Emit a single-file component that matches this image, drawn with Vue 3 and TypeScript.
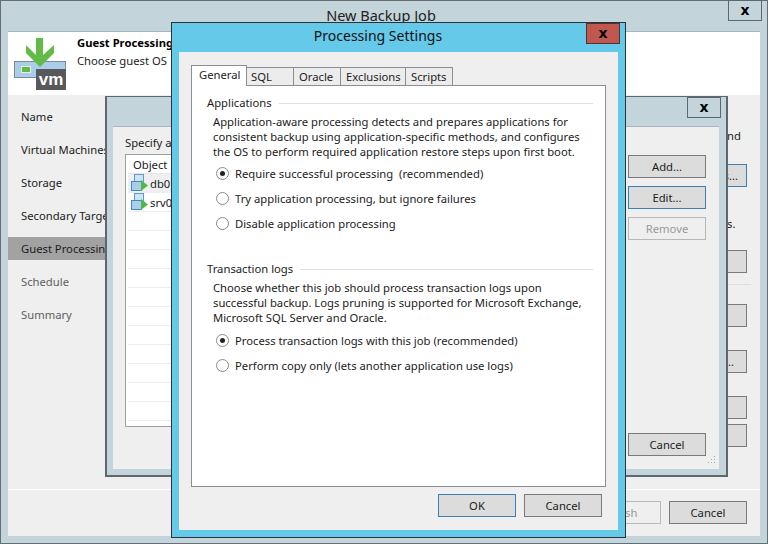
<script setup lang="ts">
const steps = [
  { label: 'Name', state: '' },
  { label: 'Virtual Machines', state: '' },
  { label: 'Storage', state: '' },
  { label: 'Secondary Target', state: '' },
  { label: 'Guest Processing', state: 'active' },
  { label: 'Schedule', state: 'muted' },
  { label: 'Summary', state: 'muted' },
]
const gridRows = 13
const tabs = ['SQL', 'Oracle', 'Exclusions', 'Scripts']
const appOptions = [
  { label: 'Require successful processing  (recommended)', on: true },
  { label: 'Try application processing, but ignore failures', on: false },
  { label: 'Disable application processing', on: false },
]
const logOptions = [
  { label: 'Process transaction logs with this job (recommended)', on: true },
  { label: 'Perform copy only (lets another application use logs)', on: false },
]
</script>

<template>
  <div class="desktop">
    <!-- main wizard window -->
    <section class="win main-win">
      <header class="main-title">New Backup Job</header>
      <button class="close main-close">x</button>
      <div class="main-client">
        <div class="banner">
          <svg class="logo" width="54" height="54" viewBox="0 0 54 54">
            <rect x="0.5" y="24.5" width="51" height="16" fill="#a9cdea" stroke="#7b8b96" />
            <rect x="7.5" y="29.5" width="9" height="6" fill="#62bb46" stroke="#e4f0e0" />
            <path d="M22 1h7v17l11-10v8L26 30 12 16V8l10 10z" fill="#62bb46" />
            <rect x="22" y="32" width="30" height="21" fill="#58595b" />
            <text x="37" y="48" class="vm">vm</text>
          </svg>
          <div class="banner-text">
            <strong>Guest Processing</strong>
            <span>Choose guest OS</span>
          </div>
        </div>
        <div class="main-body">
          <nav class="steps">
            <div v-for="s in steps" :key="s.label" class="step" :class="s.state">{{ s.label }}</div>
          </nav>
          <div class="main-right">
            <span class="frag frag-nd">nd</span>
            <button class="btn blue b1">s...</button>
            <span class="frag frag-s">s.</span>
            <button class="btn b2"></button>
            <hr class="rule" />
            <button class="btn b3"></button>
            <button class="btn b4">...</button>
            <button class="btn b5"></button>
            <button class="btn b6"></button>
          </div>
        </div>
        <footer class="main-foot">
          <button class="btn disabled">Finish</button>
          <button class="btn">Cancel</button>
        </footer>
      </div>
    </section>

    <!-- middle dialog -->
    <section class="win mid-win">
      <button class="close mid-close">x</button>
      <div class="mid-client">
        <div class="mid-left">
          <div class="specify">Specify a</div>
          <div class="list">
            <div class="list-head">Object</div>
            <div class="list-row selected">
              <svg class="vmicon" width="17" height="18" viewBox="0 0 17 18">
                <rect x="3.5" y="0.5" width="9" height="9" fill="#cfe3f4" stroke="#5b9bd0" />
                <rect x="0.5" y="7.5" width="10" height="9" fill="#a9cdea" stroke="#3f88c5" />
                <path d="M10 6l7 5.5L10 17z" fill="#4fb848" />
              </svg>
              <span>db01</span>
            </div>
            <div class="list-row">
              <svg class="vmicon" width="17" height="18" viewBox="0 0 17 18">
                <rect x="3.5" y="0.5" width="9" height="9" fill="#cfe3f4" stroke="#5b9bd0" />
                <rect x="0.5" y="7.5" width="10" height="9" fill="#a9cdea" stroke="#3f88c5" />
                <path d="M10 6l7 5.5L10 17z" fill="#4fb848" />
              </svg>
              <span>srv01</span>
            </div>
            <div v-for="n in gridRows" :key="n" class="list-row empty"></div>
          </div>
        </div>
        <div class="mid-buttons">
          <button class="btn">Add...</button>
          <button class="btn blue">Edit...</button>
          <button class="btn disabled">Remove</button>
          <button class="btn push">Cancel</button>
        </div>
        <svg class="grip" width="11" height="11" viewBox="0 0 11 11">
          <g fill="#a8a8a8">
            <rect x="8" y="0" width="1" height="1" /><rect x="5" y="3" width="1" height="1" /><rect x="8" y="3" width="1" height="1" />
            <rect x="2" y="6" width="1" height="1" /><rect x="5" y="6" width="1" height="1" /><rect x="8" y="6" width="1" height="1" />
          </g>
        </svg>
      </div>
    </section>

    <!-- front dialog -->
    <section class="win front-win">
      <header class="front-title">Processing Settings</header>
      <button class="close front-close">x</button>
      <div class="front-client">
        <div class="tabstrip">
          <div class="tab current">General</div>
          <div v-for="t in tabs" :key="t" class="tab" :class="'tab-' + t.toLowerCase()">{{ t }}</div>
        </div>
        <div class="panel">
          <div class="group-head"><span>Applications</span><i></i></div>
          <p class="para">Application-aware processing detects and prepares applications for consistent backup using application-specific methods, and configures the OS to perform required application restore steps upon first boot.</p>
          <div class="radios first">
            <label v-for="o in appOptions" :key="o.label" class="radio" :class="{ on: o.on }"><b></b><span>{{ o.label }}</span></label>
          </div>
          <div class="group-head second"><span>Transaction logs</span><i></i></div>
          <p class="para">Choose whether this job should process transaction logs upon successful backup. Logs pruning is supported for Microsoft Exchange, Microsoft SQL Server and Oracle.</p>
          <div class="radios last">
            <label v-for="o in logOptions" :key="o.label" class="radio" :class="{ on: o.on }"><b></b><span>{{ o.label }}</span></label>
          </div>
        </div>
        <footer class="front-foot">
          <button class="btn blue">OK</button>
          <button class="btn">Cancel</button>
        </footer>
      </div>
    </section>
  </div>
</template>

<style>
html, body { margin: 0; padding: 0; background: #c3d5db; }
</style>

<style scoped>
.desktop {
  position: relative;
  width: 768px;
  height: 544px;
  overflow: hidden;
  font-family: "Noto Sans", "Open Sans", sans-serif;
  font-size: 11.25px;
  color: #1c1c1c;
  background: #c3d5db;
}
.win { position: absolute; box-sizing: border-box; background: #c3d5db; }
.main-win { left: 0; top: 0; width: 768px; height: 544px; border: 1px solid #666e74; }
.mid-win { left: 105px; top: 96px; width: 623px; height: 381px; border: 1px solid #5d676d; border-width: 1px 2px 2px 2px; }
.front-win { left: 171px; top: 22px; width: 455px; height: 516px; background: #65c9ea; border: 1px solid #2c3237; }

button { font: inherit; color: inherit; padding: 0; margin: 0; }
.close {
  position: absolute;
  width: 34px;
  height: 21px;
  box-sizing: border-box;
  background: #c3d5db;
  border: 1px solid #5d676d;
  font-family: "DejaVu Sans", sans-serif;
  font-weight: 700;
  font-size: 14px;
  line-height: 15px;
  color: #000;
}
.main-close { right: 5px; top: -1px; }
.mid-close { right: 5px; top: 0; }
.front-close { right: 5px; top: 0; background: #c0584f; border-color: #4a3533; }

.main-title {
  height: 30px;
  padding-right: 6px;
  text-align: center;
  font-size: 14.5px;
  line-height: 29px;
  color: #222;
}
.main-client {
  position: absolute;
  left: 7px;
  right: 7px;
  top: 30px;
  bottom: 7px;
  background: #efefef;
  display: flex;
  flex-direction: column;
  border-top: 1px solid #a9b7bd;
}
.banner {
  height: 63px;
  background: #fff;
  display: flex;
  flex: none;
}
.logo { margin: 5px 0 0 6px; }
.banner-text {
  display: flex;
  flex-direction: column;
  margin: 3px 0 0 9px;
  gap: 2px;
  line-height: 16px;
}
.banner-text strong { font-weight: 700; color: #000; white-space: nowrap; }
.main-body { flex: 1; display: flex; min-height: 0; }
.steps { width: 97px; padding-top: 10px; flex: none; }
.step {
  height: 23px;
  line-height: 23px;
  padding-left: 13px;
  margin-bottom: 10px;
  white-space: nowrap;
}
.step.active { background: #a2a2a2; }
.step.muted { color: #5f5f5f; }
.main-right {
  position: relative;
  flex: 1;
  display: flex;
  flex-direction: column;
  align-items: flex-end;
  padding-right: 13px;
}
.frag { position: absolute; left: 622px; }
.frag-nd { top: 33px; }
.frag-s { top: 121px; }
.b1 { margin-top: 69px; text-align: right; padding-right: 8px; }
.b2 { margin-top: 63px; }
.rule { width: 24px; align-self: flex-end; margin: 11px -4px 0 0; border: 0; border-top: 1px solid #d6e2e8; }
.b3 { margin-top: 19px; }
.b4 { margin-top: 23px; text-align: right; padding-right: 12px; }
.b5 { margin-top: 23px; }
.b6 { margin-top: 5px; }
.main-foot {
  flex: none;
  height: 47px;
  border-top: 1px solid #fff;
  display: flex;
  justify-content: flex-end;
  gap: 8px;
  padding: 11px 13px 0 0;
  box-sizing: border-box;
}

.btn {
  display: block;
  flex: none;
  width: 78px;
  height: 23px;
  box-sizing: border-box;
  background: #dcdcdc;
  border: 1px solid #7a7a7a;
  text-align: center;
  line-height: 20px;
  color: #1c1c1c;
}
.btn.b1 { text-align: right; padding-right: 8px; }
.btn.b4 { text-align: right; padding-right: 12px; }
.btn.blue { border-color: #3a80b5; }
.btn.disabled { background: #efefef; border-color: #b8b8b8; color: #9a9a9a; }

.mid-client {
  position: absolute;
  left: 6px;
  right: 7px;
  top: 29px;
  bottom: 6px;
  background: #efefef;
  border-top: 1px solid #a9b7bd;
  display: flex;
  justify-content: space-between;
  padding: 0 13px 13px 12px;
}
.specify { margin-top: 7px; height: 20px; line-height: 18px; }
.list { width: 400px; height: 273px; border: 1px solid #a0a0a0; background: #fff; overflow: hidden; box-sizing: border-box; padding-left: 2px; }
.list-head { height: 18px; line-height: 19px; padding-left: 5px; border-bottom: 1px solid #e6e6e6; }
.list-row {
  height: 19px;
  box-sizing: border-box;
  border-bottom: 1px solid #ededed;
  display: flex;
  align-items: center;
  gap: 2px;
  padding-left: 3px;
}
.list-row.selected { background: #efefef; }
.mid-buttons { display: flex; flex-direction: column; gap: 8px; padding-top: 28px; }
.mid-buttons .push { margin-top: auto; }
.grip { position: absolute; right: 2px; bottom: 2px; }

.front-title {
  height: 29px;
  padding-right: 41px;
  text-align: center;
  font-size: 14px;
  line-height: 26px;
  color: #111;
}
.front-client {
  position: absolute;
  left: 7px;
  right: 7px;
  top: 29px;
  bottom: 7px;
  background: #efefef;
  padding: 13px 12px 0 12px;
  box-sizing: border-box;
}
.tabstrip { display: flex; height: 20px; align-items: flex-end; position: relative; z-index: 1; }
.tab {
  box-sizing: border-box;
  height: 18px;
  background: #ececec;
  border: 1px solid #8d8d96;
  border-bottom: 0;
  margin-left: -1px;
  padding-left: 5px;
  line-height: 17px;
}
.tab.current {
  margin-left: 0;
  width: 56px;
  height: 21px;
  margin-bottom: -1px;
  background: #fff;
  padding-left: 7px;
  line-height: 17px;
}
.tab-sql { width: 47px; margin-left: 0; border-left: 0; padding-left: 4px; }
.tab-oracle { width: 48px; }
.tab-exclusions { width: 66px; }
.tab-scripts { width: 48px; }
.panel {
  box-sizing: border-box;
  width: 415px;
  height: 402px;
  background: #fff;
  border: 1px solid #8d8d96;
  padding: 9px 12px 0 15px;
}
.group-head { display: flex; align-items: center; gap: 7px; height: 16px; line-height: 16px; }
.group-head i { flex: 1; height: 1px; background: #d6e2e8; }
.group-head.second { margin-top: 30px; }
.para { margin: 3px 0 0 6px; line-height: 15px; width: 378px; }
.radios { display: flex; flex-direction: column; gap: 9px; }
.radios.first { margin-top: 6px; }
.radios.last { margin-top: 7px; }
.radio { display: flex; align-items: center; height: 16px; gap: 6px; padding-left: 9px; white-space: pre; }
.radio b {
  width: 11px;
  height: 11px;
  box-sizing: content-box;
  border: 1px solid #8a8a8a;
  border-radius: 50%;
  position: relative;
  background: #fff;
  flex: none;
}
.radio.on b::after {
  content: "";
  position: absolute;
  left: 3px;
  top: 3px;
  width: 5px;
  height: 5px;
  border: 0;
  border-radius: 50%;
  background: #222;
}
.front-foot {
  display: flex;
  justify-content: flex-end;
  gap: 8px;
  padding: 7px 4px 0 0;
}
.vm {
  font-family: "Liberation Sans", Arial, sans-serif;
  font-weight: 700;
  font-size: 17px;
  fill: #fff;
  text-anchor: middle;
}
</style>
